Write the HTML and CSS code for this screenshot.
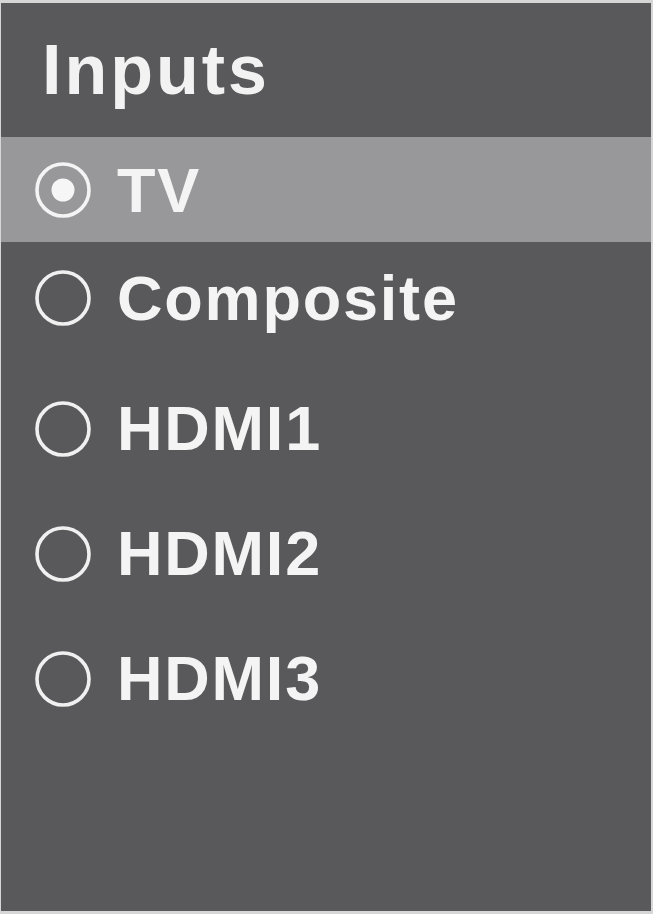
FILE: index.html
```html
<!DOCTYPE html>
<html lang="en">
<head>
<meta charset="utf-8">
<title>Inputs</title>
<link rel="stylesheet" href="styles.css">
</head>
<body>
<div class="panel">
  <header class="header"><h1 class="title">Inputs</h1></header>
  <ul class="list">
    <li class="row selected">
      <svg class="radio" viewBox="0 0 58 58" width="58" height="58"><circle cx="29" cy="29" r="26" fill="none" stroke="#f4f4f4" stroke-width="3.6"/><circle cx="29" cy="29" r="11.5" fill="#f6f6f6"/></svg>
      <span class="label">TV</span>
    </li>
    <li class="row composite">
      <svg class="radio" viewBox="0 0 58 58" width="58" height="58"><circle cx="29" cy="29" r="26" fill="none" stroke="#f0f0f0" stroke-width="3.6"/></svg>
      <span class="label">Composite</span>
    </li>
    <li class="row">
      <svg class="radio" viewBox="0 0 58 58" width="58" height="58"><circle cx="29" cy="29" r="26" fill="none" stroke="#f0f0f0" stroke-width="3.6"/></svg>
      <span class="label">HDMI1</span>
    </li>
    <li class="row">
      <svg class="radio" viewBox="0 0 58 58" width="58" height="58"><circle cx="29" cy="29" r="26" fill="none" stroke="#f0f0f0" stroke-width="3.6"/></svg>
      <span class="label">HDMI2</span>
    </li>
    <li class="row">
      <svg class="radio" viewBox="0 0 58 58" width="58" height="58"><circle cx="29" cy="29" r="26" fill="none" stroke="#f0f0f0" stroke-width="3.6"/></svg>
      <span class="label">HDMI3</span>
    </li>
  </ul>
</div>
</body>
</html>
```

FILE: styles.css
```css
html, body {
  margin: 0;
  padding: 0;
  background: #d6d6d6;
}

body {
  width: 653px;
  height: 914px;
  overflow: hidden;
  font-family: "Liberation Sans", Arial, sans-serif;
}

.panel {
  margin: 3px 0 0 1px;
  width: 650px;
  height: 908px;
  background: #59595b;
  display: flex;
  flex-direction: column;
}

.header {
  height: 134px;
  display: flex;
  align-items: center;
  padding: 0 0 0 41px;
  box-sizing: border-box;
}

.title {
  margin: 0;
  font-size: 70px;
  line-height: 1;
  font-weight: 700;
  letter-spacing: 3px;
  color: #f2f2f2;
}

.list {
  list-style: none;
  margin: 0;
  padding: 0;
}

.row {
  height: 125px;
  box-sizing: border-box;
  display: flex;
  align-items: center;
  gap: 25px;
  padding-left: 33px;
}

.row.selected {
  height: 105px;
  background: #98989a;
  padding-top: 1px;
}

.row.composite {
  height: 124px;
  padding-bottom: 12px;
}

.radio {
  flex: none;
  display: block;
}

.label {
  font-size: 63px;
  line-height: 1;
  font-weight: 700;
  letter-spacing: 1.8px;
  color: #f4f4f4;
}
```
